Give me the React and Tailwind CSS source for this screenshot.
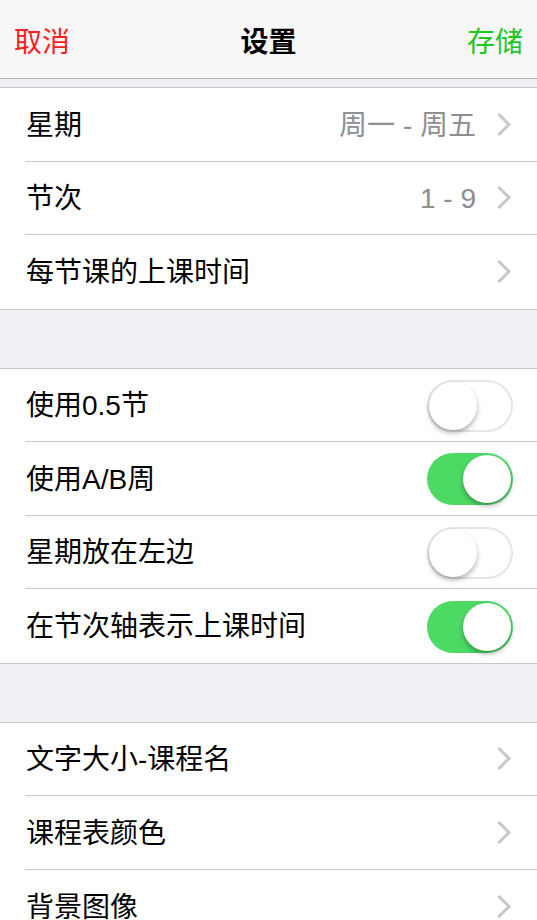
import React, { useState } from "react";

const font = {
  fontFamily: '"Liberation Sans", "Noto Sans CJK SC", sans-serif',
};

function Chevron() {
  return (
    <svg width="15" height="23" viewBox="0 0 15 23" className="shrink-0">
      <path
        d="M2.5 2 L12 11.5 L2.5 21"
        fill="none"
        stroke="#c7c7cc"
        strokeWidth="3"
        strokeLinecap="square"
      />
    </svg>
  );
}

function Toggle({ on, onClick }) {
  return (
    <button
      onClick={onClick}
      className={`relative w-[86px] h-[52px] rounded-full shrink-0 mt-[2px] transition-colors ${
        on ? "bg-[#4cd964]" : "bg-white border-2 border-[#e5e5ea]"
      }`}
    >
      <span
        className={`absolute top-1/2 -translate-y-1/2 w-[48px] h-[48px] rounded-full bg-white shadow-[0_3px_5px_rgba(0,0,0,0.3)] ${
          on ? "right-[2px]" : "left-0"
        }`}
      />
    </button>
  );
}

function Row({ label, value, toggle, on, onToggle, last }) {
  return (
    <div className="h-[73.5px] pl-[25px] flex">
      <div
        className={`flex-1 flex items-center pl-[1px] ${
          toggle ? "pr-[24px]" : "pr-[25px]"
        } ${last ? "" : "border-b border-[#c8c7cc]"}`}
      >
        <span className="flex-1 text-[28px] text-black leading-none mt-[3px]">
          {label}
        </span>
        {toggle ? (
          <Toggle on={on} onClick={onToggle} />
        ) : (
          <>
            {value && (
              <span className="text-[28px] text-[#8e8e93] leading-none mr-[21px] mt-[3px]">
                {value}
              </span>
            )}
            <Chevron />
          </>
        )}
      </div>
    </div>
  );
}

export default function App() {
  const [half, setHalf] = useState(false);
  const [ab, setAb] = useState(true);
  const [left, setLeft] = useState(false);
  const [axis, setAxis] = useState(true);

  return (
    <div className="w-[537px] h-[920px] overflow-hidden bg-[#efeff4]" style={font}>
      <div className="h-[79px] bg-[#f7f7f8] border-b border-[#b2b2b2] flex items-center justify-between px-[14px] pt-[8px]">
        <span className="text-[28px] text-[#fc1d1d] leading-none">取消</span>
        <span className="text-[28px] font-bold text-black leading-none">设置</span>
        <span className="text-[28px] text-[#1cc81c] leading-none">存储</span>
      </div>
      <div className="h-[8px]" />

      <div className="bg-white border-y border-[#c8c7cc]">
        <Row label="星期" value="周一 - 周五" />
        <Row label="节次" value="1 - 9" />
        <Row label="每节课的上课时间" last />
      </div>

      <div className="h-[58px]" />

      <div className="bg-white border-y border-[#c8c7cc]">
        <Row label="使用0.5节" toggle on={half} onToggle={() => setHalf(!half)} />
        <Row label="使用A/B周" toggle on={ab} onToggle={() => setAb(!ab)} />
        <Row label="星期放在左边" toggle on={left} onToggle={() => setLeft(!left)} />
        <Row
          label="在节次轴表示上课时间"
          toggle
          on={axis}
          onToggle={() => setAxis(!axis)}
          last
        />
      </div>

      <div className="h-[58px]" />

      <div className="bg-white border-y border-[#c8c7cc]">
        <Row label="文字大小-课程名" />
        <Row label="课程表颜色" />
        <Row label="背景图像" last />
      </div>
    </div>
  );
}
